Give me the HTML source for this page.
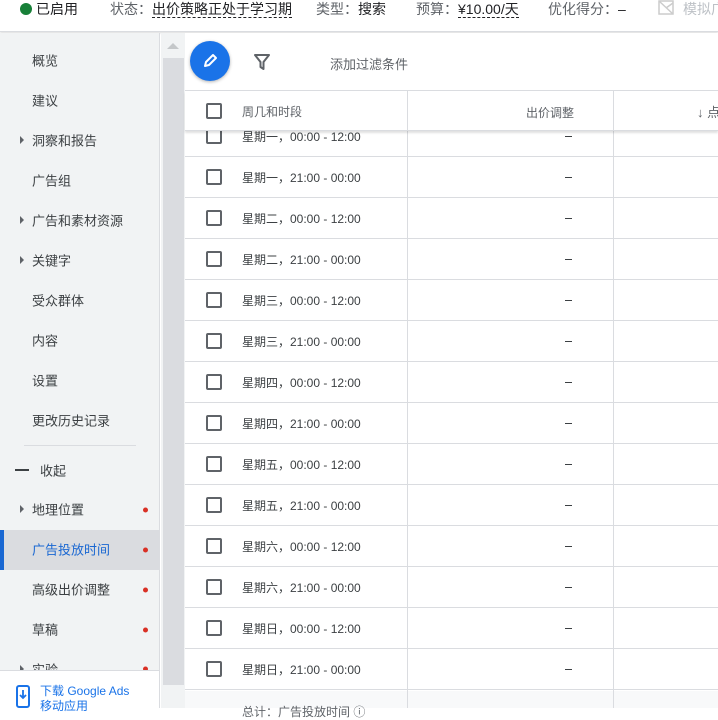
<!DOCTYPE html>
<html><head><meta charset="utf-8"><style>
*{margin:0;padding:0;box-sizing:border-box}
body{width:718px;height:708px;overflow:hidden;background:#fff;font-family:"Liberation Sans","Noto Sans CJK SC",sans-serif;font-size:13px;color:#3c4043;position:relative}
.a{position:absolute;white-space:nowrap}
.top{left:0;top:0;width:718px;height:32px;background:#fff;border-bottom:1px solid #dadce0;box-shadow:0 1px 2px rgba(0,0,0,.15)}
.top span{position:absolute;top:0px;font-size:14px;line-height:18px;color:#5f6368}
.top b{font-weight:normal;color:#202124;border-bottom:1px dashed #202124}
.side{left:0;top:33px;width:160px;height:675px;background:#f1f3f4;border-right:1px solid #dadce0}
.si{position:absolute;left:32px;font-size:13px;color:#3c4043;transform:translateY(-50%)}
.tri{position:absolute;left:20px;width:0;height:0;border-left:4px solid #5f6368;border-top:4px solid transparent;border-bottom:4px solid transparent;transform:translateY(-50%)}
.dot{position:absolute;left:143px;width:5px;height:5px;border-radius:50%;background:#d93025;transform:translateY(-50%)}
.row{position:absolute;left:185px;width:533px;height:41px;border-bottom:1px solid #dadce0}
.cb{position:absolute;left:21px;top:12px;width:16px;height:16px;border:2px solid #5f6368;border-radius:2px}
.rt{position:absolute;left:57px;top:12px;font-size:12px;color:#3c4043}
.dash{position:absolute;left:380px;top:20px;width:7px;height:1px;background:#3c4043}
</style></head><body>
<div class="a top">
<div class="a" style="left:20px;top:3px;width:12px;height:12px;border-radius:50%;background:#188038"></div>
<span style="left:36px;color:#202124">已启用</span>
<span style="left:110px">状态：<b>出价策略正处于学习期</b></span>
<span style="left:316px">类型：<span style="position:static;color:#202124">搜索</span></span>
<span style="left:416px">预算：<b>¥10.00/天</b></span>
<span style="left:548px">优化得分：<span style="position:static;color:#202124">–</span></span>
<svg class="a" style="left:658px;top:0" width="16" height="16" viewBox="0 0 16 16"><rect x="1" y="1" width="14" height="13" fill="none" stroke="#ccc" stroke-width="1.5"/><path d="M1 1L15 14M8 8L15 3" stroke="#ccc" fill="none" stroke-width="1.5"/></svg>
<span style="left:683px;color:#bdc1c6">模拟广</span>
</div>
<div class="a side">
<div class="si" style="top:27px">概览</div>
<div class="si" style="top:67px">建议</div>
<div class="tri" style="top:107px"></div><div class="si" style="top:107px">洞察和报告</div>
<div class="si" style="top:147px">广告组</div>
<div class="tri" style="top:187px"></div><div class="si" style="top:187px">广告和素材资源</div>
<div class="tri" style="top:227px"></div><div class="si" style="top:227px">关键字</div>
<div class="si" style="top:267px">受众群体</div>
<div class="si" style="top:307px">内容</div>
<div class="si" style="top:347px">设置</div>
<div class="si" style="top:387px">更改历史记录</div>
<div class="a" style="left:24px;top:412px;width:112px;height:1px;background:#dadce0"></div>
<div class="a" style="left:15px;top:436px;width:14px;height:2px;background:#3c4043"></div>
<div class="si" style="left:40px;top:437px">收起</div>
<div class="tri" style="top:476px"></div><div class="si" style="top:476px">地理位置</div><div class="dot" style="top:477px"></div>
<div class="a" style="left:0;top:497px;width:159px;height:40px;background:#dadce0"></div>
<div class="a" style="left:0;top:497px;width:4px;height:40px;background:#1967d2"></div>
<div class="si" style="top:516px;color:#1967d2">广告投放时间</div><div class="dot" style="top:517px"></div>
<div class="si" style="top:556px">高级出价调整</div><div class="dot" style="top:557px"></div>
<div class="si" style="top:596px">草稿</div><div class="dot" style="top:597px"></div>
<div class="tri" style="top:636px"></div><div class="si" style="top:636px">实验</div><div class="dot" style="top:636px"></div>
<div class="a" style="left:0;top:637px;width:159px;height:38px;background:#fff;border-top:1px solid #dadce0"></div>
<svg class="a" style="left:16px;top:652px" width="14" height="23" viewBox="0 0 14 23"><rect x="1" y="1" width="12" height="21" rx="2" fill="none" stroke="#1a73e8" stroke-width="2"/><path d="M7 5v8M4 10l3 3 3-3" stroke="#1a73e8" stroke-width="1.8" fill="none"/></svg>
<div class="a" style="left:40px;top:651px;font-size:12px;color:#1a73e8;line-height:15px">下载 Google Ads<br>移动应用</div>
</div>
<div class="a" style="left:161px;top:33px;width:24px;height:675px;background:#f1f3f4"></div>
<div class="a" style="left:163px;top:58px;width:21px;height:627px;background:#dadce0"></div>
<div class="a" style="left:167px;top:43px;width:0;height:0;border-left:6px solid transparent;border-right:6px solid transparent;border-bottom:6px solid #c4c7c9"></div>
<div class="row" style="top:116px"><div class="cb"></div><div class="rt">星期一，00:00 - 12:00</div><div class="dash"></div></div>
<div class="row" style="top:157px"><div class="cb"></div><div class="rt">星期一，21:00 - 00:00</div><div class="dash"></div></div>
<div class="row" style="top:198px"><div class="cb"></div><div class="rt">星期二，00:00 - 12:00</div><div class="dash"></div></div>
<div class="row" style="top:239px"><div class="cb"></div><div class="rt">星期二，21:00 - 00:00</div><div class="dash"></div></div>
<div class="row" style="top:280px"><div class="cb"></div><div class="rt">星期三，00:00 - 12:00</div><div class="dash"></div></div>
<div class="row" style="top:321px"><div class="cb"></div><div class="rt">星期三，21:00 - 00:00</div><div class="dash"></div></div>
<div class="row" style="top:362px"><div class="cb"></div><div class="rt">星期四，00:00 - 12:00</div><div class="dash"></div></div>
<div class="row" style="top:403px"><div class="cb"></div><div class="rt">星期四，21:00 - 00:00</div><div class="dash"></div></div>
<div class="row" style="top:444px"><div class="cb"></div><div class="rt">星期五，00:00 - 12:00</div><div class="dash"></div></div>
<div class="row" style="top:485px"><div class="cb"></div><div class="rt">星期五，21:00 - 00:00</div><div class="dash"></div></div>
<div class="row" style="top:526px"><div class="cb"></div><div class="rt">星期六，00:00 - 12:00</div><div class="dash"></div></div>
<div class="row" style="top:567px"><div class="cb"></div><div class="rt">星期六，21:00 - 00:00</div><div class="dash"></div></div>
<div class="row" style="top:608px"><div class="cb"></div><div class="rt">星期日，00:00 - 12:00</div><div class="dash"></div></div>
<div class="row" style="top:649px"><div class="cb"></div><div class="rt">星期日，21:00 - 00:00</div><div class="dash"></div></div>
<div class="a" style="left:185px;top:691px;width:533px;height:17px;background:#f8f9fa"></div>
<div class="a" style="left:242px;top:703px;font-size:12px;color:#5f6368">总计：广告投放时间 ⓘ</div>
<div class="a" style="left:407px;top:91px;width:1px;height:617px;background:#dadce0"></div>
<div class="a" style="left:613px;top:91px;width:1px;height:617px;background:#dadce0"></div>
<div class="a" style="left:185px;top:33px;width:533px;height:58px;background:#fff;border-bottom:1px solid #dadce0"></div>
<div class="a" style="left:190px;top:41px;width:40px;height:40px;border-radius:50%;background:#1a73e8;box-shadow:0 1px 3px rgba(0,0,0,.3)"></div>
<svg class="a" style="left:200px;top:51px" width="20" height="20" viewBox="0 0 20 20"><path d="M5 15L6 11L13 4L16 7L9 14Z" fill="none" stroke="#fff" stroke-width="2" stroke-linejoin="round"/></svg>
<svg class="a" style="left:253px;top:53px" width="18" height="18" viewBox="0 0 18 18"><path d="M2 2H16L10.5 9V16L7.5 14V9Z" fill="none" stroke="#5f6368" stroke-width="2" stroke-linejoin="round"/></svg>
<div class="a" style="left:330px;top:54px;font-size:13px;color:#5f6368">添加过滤条件</div>
<div class="a" style="left:185px;top:91px;width:533px;height:40px;background:#fff;border-bottom:1px solid #dadce0;box-shadow:0 2px 2px rgba(0,0,0,.12)">
<div class="cb" style="top:12px"></div>
<div class="rt" style="top:12px;color:#5f6368">周几和时段</div>
<div class="a" style="left:222px;top:0;width:1px;height:40px;background:#dadce0"></div>
<div class="a" style="left:428px;top:0;width:1px;height:40px;background:#dadce0"></div>
<div class="a" style="left:341px;top:13px;font-size:12px;color:#5f6368">出价调整</div>
<div class="a" style="left:512px;top:11px;font-size:13px;color:#5f6368">↓ 点</div>
</div>
</body></html>
